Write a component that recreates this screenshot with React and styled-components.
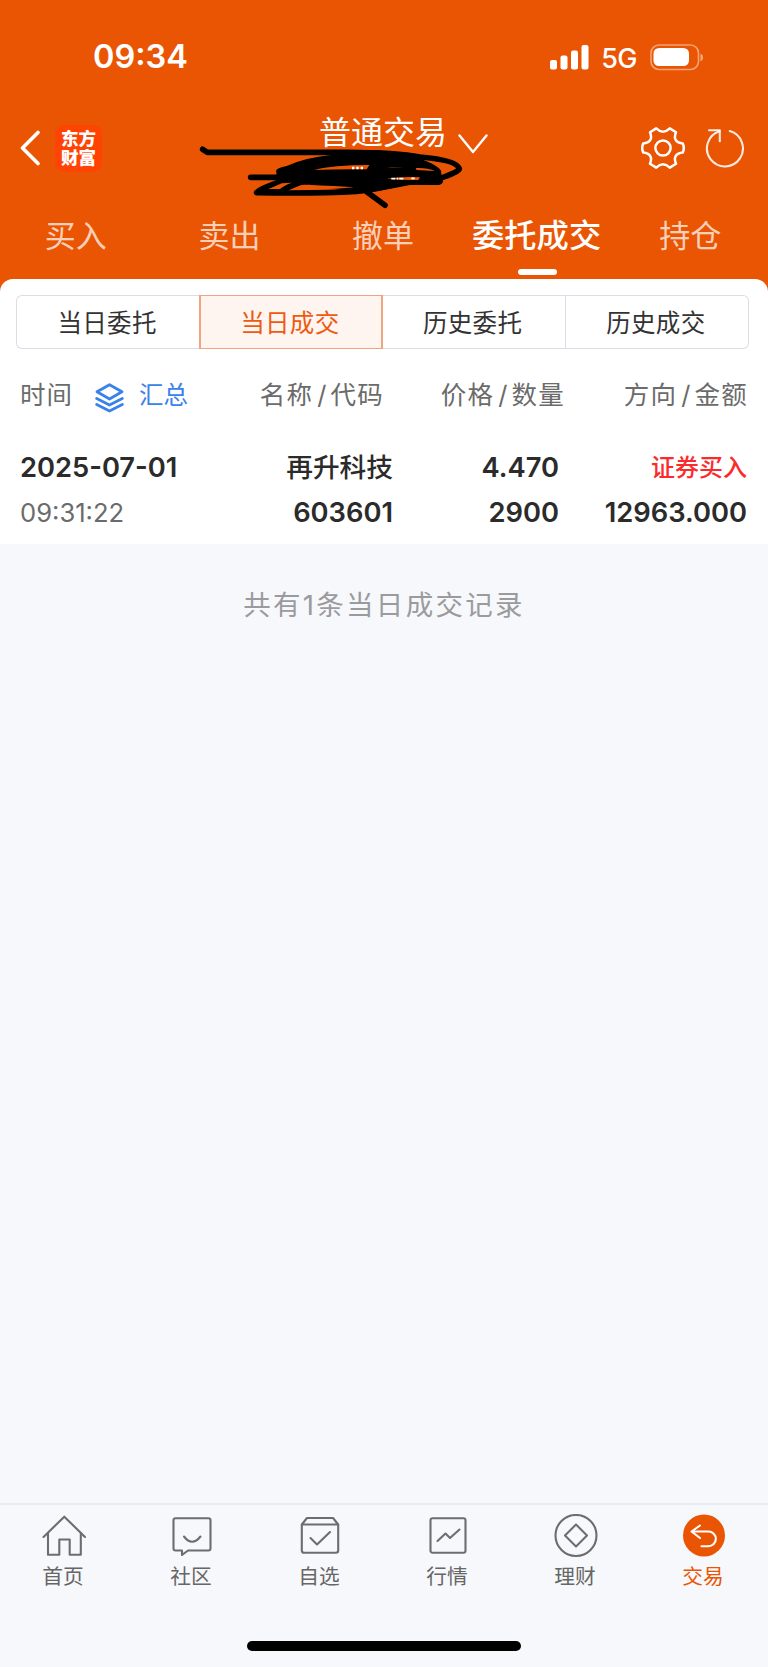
import React, { useState } from 'react';
import styled, { createGlobalStyle } from 'styled-components';


const ORANGE = '#ea5504';

const GlobalStyle = createGlobalStyle`
    * {
        box-sizing: border-box;
    }

    body {
        margin: 0;
        background: #f7f8fb;
        font-family: Inter, "Noto Sans CJK SC", sans-serif;
    }

    svg {
        display: block;
        flex: none;
    }
`

const mainTabs = ['买入', '卖出', '撤单', '委托成交', '持仓'];
const segments = ['当日委托', '当日成交', '历史委托', '历史成交'];

const records = [
    {
        date: '2025-07-01',
        time: '09:31:22',
        name: '再升科技',
        code: '603601',
        price: '4.470',
        count: '2900',
        direction: '证券买入',
        amount: '12963.000',
    },
];


const SignalIcon = () => (
    <svg width="39" height="25" viewBox="0 0 39 25" fill="#fff">
        <rect x="0" y="15" width="7" height="9.5" rx="2" />
        <rect x="10.5" y="10.5" width="7" height="14" rx="2" />
        <rect x="21" y="5.5" width="7" height="19" rx="2" />
        <rect x="31.5" y="0" width="7" height="24.5" rx="2" />
    </svg>
)

const BatteryIcon = () => (
    <svg width="54" height="27" viewBox="0 0 54 27">
        <rect x="1" y="1" width="47.5" height="24.5" rx="8" fill="none" stroke="#fff" strokeOpacity="0.45" strokeWidth="1.6" />
        <rect x="3.5" y="4" width="35.5" height="18" rx="5.5" fill="#fff" />
        <path d="M50.5 9.5q2.6 1.2 2.6 4t-2.6 4z" fill="#fff" fillOpacity="0.5" />
    </svg>
)

const BackIcon = () => (
    <svg width="21" height="36" viewBox="0 0 21 36" fill="none" stroke="#fff" strokeWidth="3.6" strokeLinecap="round" strokeLinejoin="round">
        <path d="M18 2.500L2.500 18l15.500 15.500" />
    </svg>
)

const DownIcon = () => (
    <svg width="30" height="20" viewBox="0 0 30 20" fill="none" stroke="#fff" strokeWidth="2.4" strokeLinecap="round" strokeLinejoin="round">
        <path d="M1.500 1.500L15 18 28.500 1.500" />
    </svg>
)

const GearIcon = () => (
    <svg width="44" height="44" viewBox="0 0 44 44" fill="none" stroke="#fff" strokeWidth="2.500" strokeLinejoin="round">
        <circle cx="22" cy="22" r="7.600" />
        <path d="M15.200 2.400Q22 9 28.800 2.400L35 6.200C32 13.500 35.500 16.800 41.800 17.500Q43.800 22 41.800 26.500C35.500 27.200 32 30.500 35 37.800L28.800 41.600Q22 35 15.200 41.600L9 37.800C12 30.500 8.500 27.200 2.200 26.500Q0.200 22 2.200 17.500C8.500 16.800 12 13.500 9 6.200Z" />
    </svg>
)

const RefreshIcon = () => (
    <svg width="40" height="40" viewBox="0 0 40 40" fill="none" stroke="#fff" strokeOpacity="0.88" strokeWidth="2.1" strokeLinecap="round" strokeLinejoin="round">
        <path d="M24.800 3.100A18 18 0 1 1 14.400 3.300" />
        <path d="M4 2.300h10.800v11" />
    </svg>
)

const LayersIcon = () => (
    <svg width="29" height="30" viewBox="0 0 29 30" fill="none" stroke="#3a82ea" strokeWidth="2.800" strokeLinecap="round" strokeLinejoin="round">
        <path d="M14.500 1.700L27 8.800 14.500 16 2 8.800z" />
        <path d="M1.700 15.500l12.800 6.500L27.300 15.500M1.700 21.500l12.800 6.500 12.800-6.500" />
    </svg>
)

/* marker strokes that hide the account number */
const MarkerScribble = () => (
    <ScribbleLayer width="310" height="120" viewBox="0 0 930 360" fill="none" stroke="#000" strokeWidth="17" strokeLinecap="round" strokeLinejoin="round">
        <path fill="#000" stroke="none" d="M258 212Q262 203 290 198Q345 172 430 164L480 150H560L655 165Q740 190 753 212L757 245Q755 254 745 255H660Q570 273 510 280L360 254H270L262 236Z" />
        <path d="M38 148L52 157H470Q620 158 690 171Q800 180 808 206Q808 215 745 237" />
        <path d="M182 232H290" />
        <path d="M300 236Q210 263 200 278Q380 281 500 274Q570 268 650 244H750" />
        <path d="M350 240Q290 262 275 272L230 276M530 275L585 316" />
        <g fill={ORANGE} stroke="none">
            <path d="M372 210Q430 195 538 195L530 208Q440 207 372 210Z" />
            <path d="M586 205Q610 200 640 201Q610 202 586 205Z" />
            <path d="M677 204Q715 203 735 213L680 210Z" />
            <path d="M590 236Q640 228 690 232L685 240Q630 240 590 236Z" />
            <path d="M326 267Q345 256 375 256Q430 257 492 262Q420 270 326 267Z" />
            <path d="M237 267L275 250L306 248Q282 255 270 267Z" />
        </g>
        <path stroke="#fff" strokeWidth="7" strokeLinecap="butt" strokeDasharray="7 6" d="M486 204H522" />
        <path stroke="#fff" strokeWidth="5" strokeLinecap="butt" strokeDasharray="12 4 5 3" d="M604 236H644M664 235H674" />
    </ScribbleLayer>
)

const HomeIcon = () => (
    <g>
        <path d="M1.500 22.900L22.300 2.700 43 22.900" />
        <path d="M6 19.500V40.800H17.300V25.500H27.700V40.800H38.800V19.500" />
    </g>
)

const CommunityIcon = () => (
    <g>
        <path d="M5.500 4.200H38.500Q40.500 4.200 40.500 6.200V34.500Q40.500 36.500 38.500 36.500H18L12 41V36.500H5.500Q3.500 36.500 3.500 34.500V6.200Q3.500 4.200 5.500 4.200Z" />
        <path d="M14 22.500Q22 33 30.500 22.500" />
    </g>
)

const WatchlistIcon = () => (
    <g>
        <path d="M3.800 10.500L9 4H35L40.200 10.500V36.500Q40.200 38.700 38 38.700H6Q3.800 38.700 3.800 36.500ZM3.800 10.500H40.200" />
        <path d="M12.500 24L19 30.500 32 18" />
    </g>
)

const MarketIcon = () => (
    <g>
        <rect x="4.500" y="4.200" width="35" height="34.500" rx="2" />
        <path d="M11.500 27L19.500 19.500 24 24 33.500 15.500" />
    </g>
)

const WealthIcon = () => (
    <g>
        <circle cx="22" cy="21.500" r="20.500" />
        <path d="M22 10.500L33 21.500 22 32.500 11 21.500Z" />
    </g>
)

const TradeIcon = () => (
    <g>
        <circle cx="22" cy="21.500" r="21" fill={ORANGE} stroke="none" />
        <path stroke="#fff" d="M18 11.500L9.500 17.500l8.500 6.500M10.500 17.500H26.500A7.300 7.300 0 0 1 26.500 32.200H19.500" />
    </g>
)

const bottomTabs = [
    { label: '首页', Icon: HomeIcon },
    { label: '社区', Icon: CommunityIcon },
    { label: '自选', Icon: WatchlistIcon },
    { label: '行情', Icon: MarketIcon },
    { label: '理财', Icon: WealthIcon },
    { label: '交易', Icon: TradeIcon },
];


const App = () => {

    const [tab, setTab] = useState('委托成交');
    const [segment, setSegment] = useState('当日成交');
    const [page, setPage] = useState('交易');


    return (
        <Screen>
            <GlobalStyle />

            <Header>
                <StatusBar>
                    <Clock>09:34</Clock>
                    <StatusIcons>
                        <SignalIcon />
                        <Network>5G</Network>
                        <BatteryIcon />
                    </StatusIcons>
                </StatusBar>

                <NavBar>
                    <NavSide>
                        <BackIcon />
                        <Logo>东方财富</Logo>
                    </NavSide>
                    <NavTitle>
                        <h1>普通交易</h1>
                        <DownIcon />
                    </NavTitle>
                    <NavActions>
                        <GearIcon />
                        <RefreshIcon />
                    </NavActions>
                    <MarkerScribble />
                </NavBar>

                <MainTabs>
                    {
                        mainTabs.map( name => (
                            <MainTab key={name} $active={name === tab} onClick={() => setTab(name)}>
                                {name}
                            </MainTab>
                        ))
                    }
                </MainTabs>
            </Header>

            <Sheet>
                <Segments>
                    {
                        segments.map( name => (
                            <Segment key={name} $active={name === segment} onClick={() => setSegment(name)}>
                                {name}
                            </Segment>
                        ))
                    }
                </Segments>

                <ColumnTitles>
                    <TimeTitle>
                        时间
                        <Summary>
                            <LayersIcon />
                            汇总
                        </Summary>
                    </TimeTitle>
                    <ColumnTitle>名称<i>/</i>代码</ColumnTitle>
                    <ColumnTitle>价格<i>/</i>数量</ColumnTitle>
                    <ColumnTitle>方向<i>/</i>金额</ColumnTitle>
                </ColumnTitles>

                {
                    records.map( record => (
                        <Record key={record.code + record.time}>
                            <Cell $left>
                                <Value>{record.date}</Value>
                                <Time>{record.time}</Time>
                            </Cell>
                            <Cell>
                                <StockName>{record.name}</StockName>
                                <Value>{record.code}</Value>
                            </Cell>
                            <Cell $inset>
                                <Value>{record.price}</Value>
                                <Value>{record.count}</Value>
                            </Cell>
                            <Cell>
                                <Direction>{record.direction}</Direction>
                                <Value>{record.amount}</Value>
                            </Cell>
                        </Record>
                    ))
                }
            </Sheet>

            <Total>共有{records.length}条当日成交记录</Total>

            <BottomBar>
                <BottomTabs>
                    {
                        bottomTabs.map( ({ label, Icon }) => (
                            <BottomTab key={label} $active={label === page} onClick={() => setPage(label)}>
                                <svg width="44" height="44" viewBox="0 0 44 44" fill="none" stroke="#6d6d6f" strokeWidth="2.100" strokeLinecap="round" strokeLinejoin="round">
                                    <Icon />
                                </svg>
                                <span>{label}</span>
                            </BottomTab>
                        ))
                    }
                </BottomTabs>
                <HomeIndicator />
            </BottomBar>
        </Screen>
    )
}
export default App;


const Screen = styled.div`
    display: flex;
    flex-direction: column;
    width: 768px;
    height: 1667px;
    overflow: hidden;
    background: #f7f8fb;
`

const Header = styled.header`
    height: 291px;
    flex: none;
    background: ${ORANGE};
    color: #fff;
`

const StatusBar = styled.div`
    display: flex;
    justify-content: space-between;
    align-items: center;
    height: 114px;
    padding: 0 64px 0 93px;
`

const Clock = styled.div`
    font-size: 32.5px;
    font-weight: 600;
    line-height: 40px;
`

const StatusIcons = styled.div`
    display: flex;
    align-items: center;
`

const Network = styled.span`
    margin: 3px 13px 0 12px;
    font-size: 27px;
    font-weight: 500;
    line-height: 30px;
    letter-spacing: -0.5px;
`

const NavBar = styled.div`
    position: relative;
    display: grid;
    grid-template-columns: 1fr auto 1fr;
    height: 92px;
    padding: 0 23px 0 20px;
`

const NavSide = styled.div`
    display: flex;
    align-items: center;
    gap: 14px;
    height: 68px;
`

const NavActions = styled(NavSide)`
    justify-content: flex-end;
    gap: 20px;
`

const Logo = styled.div`
    width: 47px;
    height: 47px;
    padding: 3px 5.5px 0 6px;
    border-radius: 9px;
    background: #ff4302;
    font-family: "Noto Sans CJK SC", sans-serif;
    font-size: 17.5px;
    font-weight: 900;
    line-height: 19.5px;
    word-break: break-all;
`

const NavTitle = styled.div`
    display: flex;
    gap: 11px;
    margin-left: 42px;

    h1 {
        margin: 0;
        font-size: 32px;
        font-weight: 400;
        line-height: 38px;
    }

    svg {
        margin-top: 20px;
    }
`

const ScribbleLayer = styled.svg`
    position: absolute;
    left: 190px;
    top: -14px;
    pointer-events: none;
`

const MainTabs = styled.nav`
    display: grid;
    grid-template-columns: repeat(5, 1fr);
`

const MainTab = styled.div`
    display: flex;
    flex-direction: column;
    align-items: center;
    font-size: ${props => props.$active ? '32.3px' : '31px'};
    font-weight: ${props => props.$active ? 500 : 400};
    line-height: 60px;
    color: ${props => props.$active ? '#fff' : 'rgba(255, 255, 255, 0.72)'};
    text-indent: -2px;
    white-space: nowrap;

    &::after {
        content: '';
        width: 39px;
        height: 6px;
        margin-top: 3px;
        border-radius: 3px;
        background: ${props => props.$active ? '#fff' : 'transparent'};
    }
`

const Sheet = styled.main`
    height: 265px;
    flex: none;
    margin-top: -12px;
    padding: 16px 19px 0 16px;
    border-radius: 13px 13px 0 0;
    background: #fff;
`

const Segments = styled.div`
    display: grid;
    grid-template-columns: repeat(4, 1fr);
    height: 54px;
`

const Segment = styled.div`
    border: 1px solid ${props => props.$active ? '#f0a580' : '#dcdde4'};
    border-width: ${props => props.$active ? '1px 2px' : '1px 1px 1px 0'};
    background: ${props => props.$active ? '#fef5f1' : '#fff'};
    color: ${props => props.$active ? '#ee5a10' : '#333'};
    height: 54px;
    font-size: 24.5px;
    letter-spacing: 0.3px;
    line-height: 54px;
    text-align: center;
    text-indent: -2px;

    &:first-child {
        border-left-width: 1px;
        border-right-width: 0;
        border-radius: 6px 0 0 6px;
    }

    &:last-child {
        border-radius: 0 6px 6px 0;
    }
`

const ColumnTitles = styled.div`
    display: grid;
    grid-template-columns: 213px 151px 181px 183px;
    margin-top: 26px;
    padding-left: 4px;
    color: #6b6b6b;
    font-size: 25.5px;
    letter-spacing: 1px;
    line-height: 40px;
`

const ColumnTitle = styled.div`
    text-align: right;
    letter-spacing: 1.2px;

    i {
        margin: 0 3px 0 4px;
        font-style: normal;
    }
`

const TimeTitle = styled.div`
    display: flex;
`

const Summary = styled.span`
    display: flex;
    align-items: center;
    gap: 15px;
    margin-left: 22px;
    color: #3a82ea;
    font-size: 24.5px;
    letter-spacing: 0;

    svg {
        margin-top: 5px;
    }
`

const Record = styled.div`
    display: grid;
    grid-template-columns: 213px 160px 172px 182px;
    margin-top: 30px;
    padding-left: 4px;
    color: #2b2b2b;
`

const Cell = styled.div`
    display: flex;
    flex-direction: column;
    align-items: ${props => props.$left ? 'flex-start' : 'flex-end'};
    padding-right: ${props => props.$inset ? '6px' : '0'};
    line-height: 45px;
    white-space: nowrap;
`

const Value = styled.div`
    font-size: 27.3px;
    font-weight: 600;
`

const Time = styled.div`
    color: #6b6b6b;
    font-size: 25.6px;
`

const StockName = styled.div`
    font-size: 26.7px;
    font-weight: 500;
`

const Direction = styled.div`
    color: #fb2b2d;
    font-size: 24px;
    font-weight: 500;
`

const Total = styled.div`
    flex: 1;
    padding-top: 41px;
    color: #9b9b9d;
    font-size: 27.5px;
    letter-spacing: 2.3px;
    line-height: 40px;
    text-align: center;
`

const BottomBar = styled.footer`
    display: flex;
    flex-direction: column;
    align-items: center;
    height: 164px;
    flex: none;
    border-top: 2px solid #e9ebf0;
`

const BottomTabs = styled.nav`
    display: grid;
    grid-template-columns: repeat(6, 1fr);
    width: 100%;
    height: 136px;
    padding-top: 9px;
`

const BottomTab = styled.div`
    display: flex;
    flex-direction: column;
    align-items: center;
    gap: 4px;
    color: ${props => props.$active ? ORANGE : '#666'};
    font-size: 20.7px;
    line-height: 30px;

    span {
        margin-right: 2px;
    }
`

const HomeIndicator = styled.div`
    width: 274px;
    height: 10px;
    border-radius: 5px;
    background: #000;
`
